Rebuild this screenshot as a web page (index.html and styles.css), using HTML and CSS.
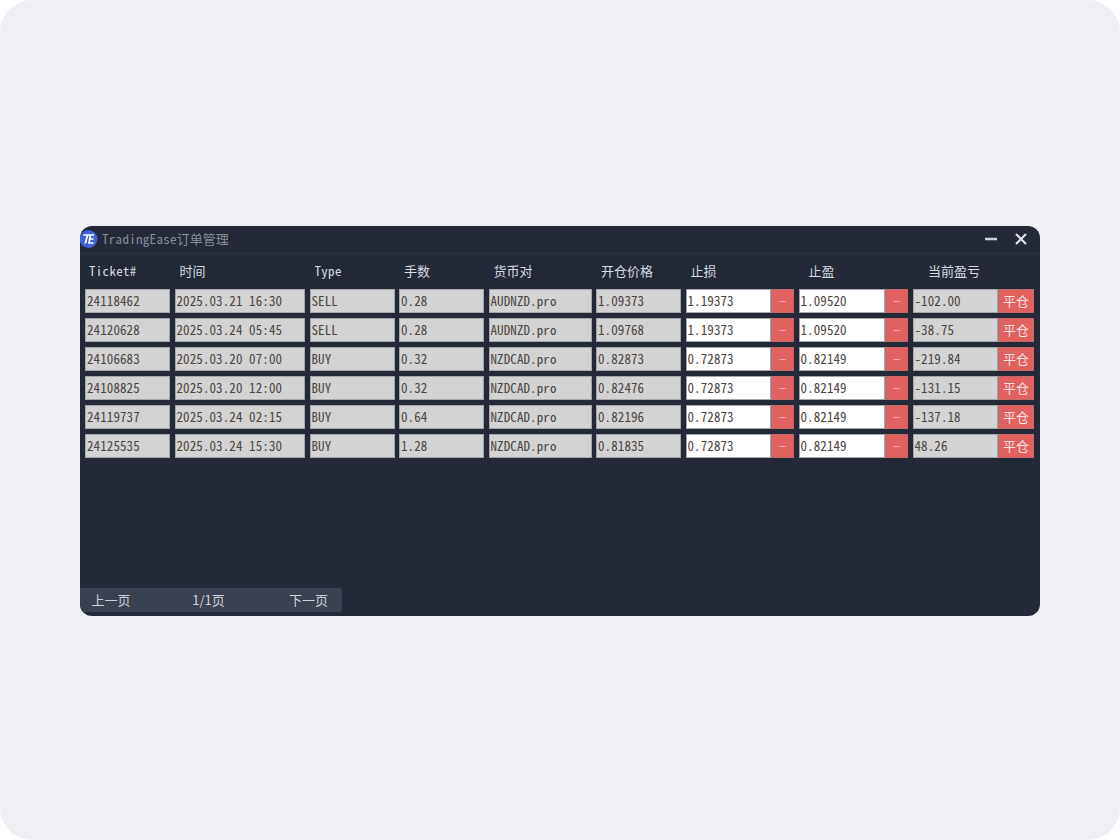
FILE: index.html
```html
<!DOCTYPE html>
<html lang="zh">
<head>
<meta charset="utf-8">
<title>TradingEase订单管理</title>
<link rel="stylesheet" href="styles.css">
</head>
<body>
<main class="stage">
<section class="window">
<header class="titlebar">
<svg class="logo" viewBox="0 0 18 18" width="18" height="18"><circle cx="8.5" cy="9" r="9" fill="#3f63d8"/><path d="M3.5 5h10.5M7.6 5.2 5.2 13.5M10.4 5 9 13h4.4M9.8 9h3.6" fill="none" stroke="#fff" stroke-width="1.7"/></svg>
<span class="title"><span class="lat">TradingEase</span>订单管理</span>
<span class="winctl">
<svg class="ico-min" viewBox="0 0 12 12" width="12" height="12"><path d="M0 6h12" stroke="#cfd1d6" stroke-width="2.4"/></svg>
<svg class="ico-close" viewBox="0 0 12 12" width="12" height="12"><path d="M1 1l10 10M11 1 1 11" stroke="#dfe1e5" stroke-width="2.2"/></svg>
</span>
</header>
<div class="grid head">
<div class="th p4"><span class="lat">Ticket#</span></div>
<div class="th p5">时间</div>
<div class="th p5"><span class="lat">Type</span></div>
<div class="th p5">手数</div>
<div class="th p5">货币对</div>
<div class="th p5">开仓价格</div>
<div class="th p5">止损</div>
<div class="th p10">止盈</div>
<div class="th p16">当前盈亏</div>
</div>
<div class="rows">
<div class="grid row"><div class="cell">24118462</div><div class="cell">2025.03.21 16:30</div><div class="cell">SELL</div><div class="cell">0.28</div><div class="cell">AUDNZD.pro</div><div class="cell">1.09373</div><div class="pair"><div class="cell in">1.19373</div><div class="minus">−</div></div><div class="pair"><div class="cell in">1.09520</div><div class="minus">−</div></div><div class="pair"><div class="cell">-102.00</div><div class="close">平仓</div></div></div>
<div class="grid row"><div class="cell">24120628</div><div class="cell">2025.03.24 05:45</div><div class="cell">SELL</div><div class="cell">0.28</div><div class="cell">AUDNZD.pro</div><div class="cell">1.09768</div><div class="pair"><div class="cell in">1.19373</div><div class="minus">−</div></div><div class="pair"><div class="cell in">1.09520</div><div class="minus">−</div></div><div class="pair"><div class="cell">-38.75</div><div class="close">平仓</div></div></div>
<div class="grid row"><div class="cell">24106683</div><div class="cell">2025.03.20 07:00</div><div class="cell">BUY</div><div class="cell">0.32</div><div class="cell">NZDCAD.pro</div><div class="cell">0.82873</div><div class="pair"><div class="cell in">0.72873</div><div class="minus">−</div></div><div class="pair"><div class="cell in">0.82149</div><div class="minus">−</div></div><div class="pair"><div class="cell">-219.84</div><div class="close">平仓</div></div></div>
<div class="grid row"><div class="cell">24108825</div><div class="cell">2025.03.20 12:00</div><div class="cell">BUY</div><div class="cell">0.32</div><div class="cell">NZDCAD.pro</div><div class="cell">0.82476</div><div class="pair"><div class="cell in">0.72873</div><div class="minus">−</div></div><div class="pair"><div class="cell in">0.82149</div><div class="minus">−</div></div><div class="pair"><div class="cell">-131.15</div><div class="close">平仓</div></div></div>
<div class="grid row"><div class="cell">24119737</div><div class="cell">2025.03.24 02:15</div><div class="cell">BUY</div><div class="cell">0.64</div><div class="cell">NZDCAD.pro</div><div class="cell">0.82196</div><div class="pair"><div class="cell in">0.72873</div><div class="minus">−</div></div><div class="pair"><div class="cell in">0.82149</div><div class="minus">−</div></div><div class="pair"><div class="cell">-137.18</div><div class="close">平仓</div></div></div>
<div class="grid row"><div class="cell">24125535</div><div class="cell">2025.03.24 15:30</div><div class="cell">BUY</div><div class="cell">1.28</div><div class="cell">NZDCAD.pro</div><div class="cell">0.81835</div><div class="pair"><div class="cell in">0.72873</div><div class="minus">−</div></div><div class="pair"><div class="cell in">0.82149</div><div class="minus">−</div></div><div class="pair"><div class="cell">48.26</div><div class="close">平仓</div></div></div>
</div>
<footer class="pager">
<div class="pg pg-prev">上一页</div>
<div class="pg pg-mid">1/1页</div>
<div class="pg pg-next">下一页</div>
</footer>
</section>
</main>
</body>
</html>
```

FILE: styles.css
```css
* { box-sizing: border-box; }
html, body { margin: 0; padding: 0; background: #fff; }
body { width: 1120px; height: 840px; overflow: hidden; }
.stage {
  width: 1120px; height: 840px; padding-top: 226px;
  background: #eef0f5; border-radius: 32px;
  display: flex; justify-content: center; align-items: flex-start;
}
.window {
  width: 960px; height: 390px; background: #232936; border-radius: 12px;
  overflow: hidden; display: flex; flex-direction: column;
  font-family: "Noto Sans CJK SC", "Liberation Sans", sans-serif; font-size: 13px; line-height: 16px;
}
.titlebar {
  height: 28px; flex: none; display: flex; align-items: center;
  border-bottom: 1px solid #2c3340; padding-bottom: 1px;
}
.logo { flex: none; }
.title { margin-left: 4px; color: #8a8f98; font-size: 13px; }
.lat { font-feature-settings: "hwid"; letter-spacing: 0.3px; }
.winctl { margin-left: auto; display: flex; gap: 18px; padding-right: 13px; }
.ico-min, .ico-close { display: block; }
.grid {
  display: grid; padding-left: 5px; column-gap: 4.5px;
  grid-template-columns: 85px 130.5px 85px 85px 103px 85px 108.5px 109.5px 121.5px;
}
.head { height: 35px; align-items: center; color: #d9dce1; }
.th { padding-bottom: 2px; }
.p4 { padding-left: 4px; }
.p5 { padding-left: 5px; }
.p10 { padding-left: 10px; }
.p16 { padding-left: 15.5px; }
.rows { display: flex; flex-direction: column; gap: 5px; }
.row { height: 24px; }
.cell {
  height: 24px; min-width: 0; flex: 1; background: #d3d3d3; border: 1px solid #a3a7ab;
  color: #4b443e; padding-left: 1px;
  font-feature-settings: "hwid"; font-size: 13px; letter-spacing: 0.1px; line-height: 22px;
  white-space: pre;
}
.in { background: #fff; border-color: #a3a7ab; }
.pair { display: flex; min-width: 0; }
.minus, .close {
  flex: none; height: 24px; background: #e0615d; border: 1px solid #c0686a;
  text-align: center; line-height: 21px;
}
.minus { width: 23px; color: #f2b0ad; font-size: 13px; }
.close { width: 36px; color: #f5e4e2; font-size: 13px; }
.pager {
  margin-top: auto; margin-bottom: 4px; width: 262px; height: 24px; flex: none;
  background: #3a4151; border-radius: 0 2px 2px 0; display: flex; color: #d0d3d8;
}
.pg { text-align: center; line-height: 24px; }
.pg-prev { width: 62px; }
.pg-mid { width: 133px; }
.pg-next { width: 67px; }
```
